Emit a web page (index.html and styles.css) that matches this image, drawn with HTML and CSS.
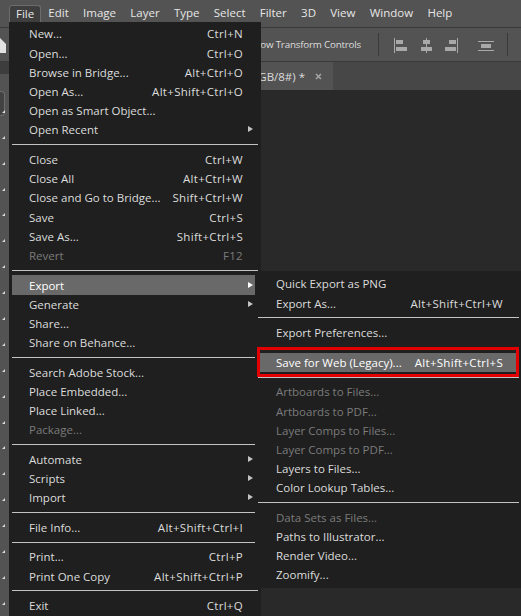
FILE: index.html
```html
<!DOCTYPE html>
<html lang="en">
<head>
<meta charset="utf-8">
<title>Photoshop File menu</title>
<link rel="stylesheet" href="styles.css">
</head>
<body>
<div class="app">
  <header class="menubar">
    <div class="mb-item is-open">File</div>
    <div class="mb-item">Edit</div>
    <div class="mb-item">Image</div>
    <div class="mb-item">Layer</div>
    <div class="mb-item">Type</div>
    <div class="mb-item">Select</div>
    <div class="mb-item">Filter</div>
    <div class="mb-item">3D</div>
    <div class="mb-item">View</div>
    <div class="mb-item">Window</div>
    <div class="mb-item">Help</div>
  </header>

  <div class="optionsbar">
    <div class="home">
      <svg width="9" height="16" viewBox="0 0 9 16"><polygon points="0,1 6,7 6,16 0,16" fill="#e2e2e2"/></svg>
    </div>
    <div class="opt-fill">
      <span class="opt-check"></span>
      <span class="opt-label">Show Transform Controls</span>
    </div>
    <span class="vsep vsep-first"></span>
    <svg class="ico ico-1" width="16" height="16" viewBox="0 0 16 16">
      <rect x="1" y="1" width="1" height="15" fill="#a9a9a9"/>
      <rect x="3" y="3" width="7" height="4" fill="#a9a9a9"/>
      <rect x="3" y="10" width="11" height="4" fill="#a9a9a9"/>
    </svg>
    <svg class="ico ico-2" width="16" height="16" viewBox="0 0 16 16">
      <rect x="8" y="1" width="1" height="15" fill="#a9a9a9"/>
      <rect x="5" y="3" width="7" height="4" fill="#a9a9a9"/>
      <rect x="3" y="10" width="11" height="4" fill="#a9a9a9"/>
    </svg>
    <svg class="ico ico-3" width="16" height="16" viewBox="0 0 16 16">
      <rect x="14" y="1" width="1" height="15" fill="#a9a9a9"/>
      <rect x="6" y="3" width="7" height="4" fill="#a9a9a9"/>
      <rect x="2" y="10" width="11" height="4" fill="#a9a9a9"/>
    </svg>
    <svg class="ico ico-4" width="16" height="16" viewBox="0 0 16 16">
      <rect x="0" y="4" width="16" height="1" fill="#a9a9a9"/>
      <rect x="3" y="7" width="10" height="4" fill="#a9a9a9"/>
      <rect x="0" y="13" width="16" height="1" fill="#a9a9a9"/>
    </svg>
    <span class="vsep vsep-last"></span>
  </div>

  <div class="main">
    <aside class="tools">
      <div class="tools-head"></div>
      <div class="tool-list">
        <div class="tool active"><span class="tool-box"></span></div>
        <div class="tool"></div><div class="tool"></div><div class="tool"></div><div class="tool"></div>
        <div class="tool"></div><div class="tool"></div><div class="tool"></div><div class="tool"></div>
        <div class="tool"></div><div class="tool"></div><div class="tool"></div><div class="tool"></div>
        <div class="tool"></div><div class="tool"></div><div class="tool"></div><div class="tool"></div>
        <div class="tool"></div><div class="tool"></div><div class="tool"></div>
      </div>
    </aside>
    <section class="doc">
      <div class="tabbar">
        <div class="tab">
          <span class="tab-title">(RGB/8#) *</span>
          <svg class="tab-close" width="7" height="7" viewBox="0 0 7 7"><path d="M1 1 L6 6 M6 1 L1 6" stroke="#a4a4a4" stroke-width="1.6"/></svg>
        </div>
      </div>
      <div class="canvas"></div>
    </section>
  </div>

  <nav class="menu file-menu">
    <div class="mi"><span class="label">New...</span><span class="key">Ctrl+N</span><span class="sub"></span></div>
    <div class="mi"><span class="label">Open...</span><span class="key">Ctrl+O</span><span class="sub"></span></div>
    <div class="mi"><span class="label">Browse in Bridge...</span><span class="key">Alt+Ctrl+O</span><span class="sub"></span></div>
    <div class="mi"><span class="label">Open As...</span><span class="key">Alt+Shift+Ctrl+O</span><span class="sub"></span></div>
    <div class="mi"><span class="label">Open as Smart Object...</span><span class="sub"></span></div>
    <div class="mi"><span class="label">Open Recent</span><span class="sub has-sub"></span></div>
    <div class="sep"></div>
    <div class="mi"><span class="label">Close</span><span class="key">Ctrl+W</span><span class="sub"></span></div>
    <div class="mi"><span class="label">Close All</span><span class="key">Alt+Ctrl+W</span><span class="sub"></span></div>
    <div class="mi"><span class="label">Close and Go to Bridge...</span><span class="key">Shift+Ctrl+W</span><span class="sub"></span></div>
    <div class="mi"><span class="label">Save</span><span class="key">Ctrl+S</span><span class="sub"></span></div>
    <div class="mi"><span class="label">Save As...</span><span class="key">Shift+Ctrl+S</span><span class="sub"></span></div>
    <div class="mi dis"><span class="label">Revert</span><span class="key">F12</span><span class="sub"></span></div>
    <div class="sep"></div>
    <div class="mi hl"><span class="label">Export</span><span class="sub has-sub"></span></div>
    <div class="mi"><span class="label">Generate</span><span class="sub has-sub"></span></div>
    <div class="mi"><span class="label">Share...</span><span class="sub"></span></div>
    <div class="mi"><span class="label">Share on Behance...</span><span class="sub"></span></div>
    <div class="sep"></div>
    <div class="mi"><span class="label">Search Adobe Stock...</span><span class="sub"></span></div>
    <div class="mi"><span class="label">Place Embedded...</span><span class="sub"></span></div>
    <div class="mi"><span class="label">Place Linked...</span><span class="sub"></span></div>
    <div class="mi dis"><span class="label">Package...</span><span class="sub"></span></div>
    <div class="sep"></div>
    <div class="mi"><span class="label">Automate</span><span class="sub has-sub"></span></div>
    <div class="mi"><span class="label">Scripts</span><span class="sub has-sub"></span></div>
    <div class="mi"><span class="label">Import</span><span class="sub has-sub"></span></div>
    <div class="sep"></div>
    <div class="mi"><span class="label">File Info...</span><span class="key">Alt+Shift+Ctrl+I</span><span class="sub"></span></div>
    <div class="sep"></div>
    <div class="mi"><span class="label">Print...</span><span class="key">Ctrl+P</span><span class="sub"></span></div>
    <div class="mi"><span class="label">Print One Copy</span><span class="key">Alt+Shift+Ctrl+P</span><span class="sub"></span></div>
    <div class="sep"></div>
    <div class="mi"><span class="label">Exit</span><span class="key">Ctrl+Q</span><span class="sub"></span></div>
  </nav>

  <nav class="menu sub-menu">
    <div class="mi"><span class="label">Quick Export as PNG</span><span class="sub"></span></div>
    <div class="mi"><span class="label">Export As...</span><span class="key">Alt+Shift+Ctrl+W</span><span class="sub"></span></div>
    <div class="sep"></div>
    <div class="mi"><span class="label">Export Preferences...</span><span class="sub"></span></div>
    <div class="sep"></div>
    <div class="mi hl"><span class="label">Save for Web (Legacy)...</span><span class="key">Alt+Shift+Ctrl+S</span><span class="sub"></span></div>
    <div class="sep"></div>
    <div class="mi dis"><span class="label">Artboards to Files...</span><span class="sub"></span></div>
    <div class="mi dis"><span class="label">Artboards to PDF...</span><span class="sub"></span></div>
    <div class="mi dis"><span class="label">Layer Comps to Files...</span><span class="sub"></span></div>
    <div class="mi dis"><span class="label">Layer Comps to PDF...</span><span class="sub"></span></div>
    <div class="mi"><span class="label">Layers to Files...</span><span class="sub"></span></div>
    <div class="mi"><span class="label">Color Lookup Tables...</span><span class="sub"></span></div>
    <div class="sep"></div>
    <div class="mi dis"><span class="label">Data Sets as Files...</span><span class="sub"></span></div>
    <div class="mi"><span class="label">Paths to Illustrator...</span><span class="sub"></span></div>
    <div class="mi"><span class="label">Render Video...</span><span class="sub"></span></div>
    <div class="mi"><span class="label">Zoomify...</span><span class="sub"></span></div>
  </nav>

  <div class="callout"></div>
</div>
</body>
</html>
```

FILE: styles.css
```css
html, body {
  margin: 0;
  padding: 0;
}

body {
  width: 521px;
  height: 616px;
  overflow: hidden;
  background: #292929;
  font-family: "Open Sans", "Noto Sans", "DejaVu Sans", sans-serif;
  font-size: 11.5px;
  -webkit-font-smoothing: antialiased;
}

.app {
  position: relative;
  width: 521px;
  height: 616px;
  overflow: hidden;
  display: flex;
  flex-direction: column;
}

/* ---------- menu bar ---------- */
.menubar {
  flex: none;
  height: 28px;
  box-sizing: border-box;
  padding: 5px 0 0 9px;
  background: #535353;
  border-bottom: 1px solid #3a3a3a;
  display: flex;
  align-items: flex-start;
}

.mb-item {
  height: 17px;
  line-height: 16px;
  padding: 0 7.15px;
  color: #e6e6e6;
  font-size: 11.5px;
  box-sizing: border-box;
  white-space: nowrap;
}

.mb-item.is-open {
  background: #3e3e3e;
  border: 1px solid #6c6c6c;
  border-bottom: none;
  border-radius: 3px 3px 0 0;
  padding: 0 6px;
}

/* ---------- options bar ---------- */
.optionsbar {
  flex: none;
  height: 34px;
  box-sizing: border-box;
  background: #535353;
  border-bottom: 1px solid #3a3a3a;
  display: flex;
  align-items: center;
}

.home {
  width: 9px;
  flex: none;
  display: flex;
}

.opt-fill {
  flex: 0 0 352px;
  display: flex;
  justify-content: flex-end;
  align-items: center;
  overflow: hidden;
  white-space: nowrap;
}

.opt-check {
  width: 11px;
  height: 11px;
  margin-right: 6px;
  border: 1px solid #8a8a8a;
  box-sizing: border-box;
}

.opt-label {
  color: #dedede;
  font-size: 9.8px;
  letter-spacing: -0.2px;
}

.vsep {
  flex: none;
  width: 1px;
  height: 23px;
  background: #393939;
}

.vsep-first { margin-left: 17px; }
.vsep-last { margin-left: 13px; }

.ico { flex: none; display: block; }
.ico-1 { margin-left: 14px; }
.ico-2 { margin-left: 9px; }
.ico-3 { margin-left: 9px; }
.ico-4 { margin-left: 19px; }

/* ---------- main area ---------- */
.main {
  flex: 1;
  display: flex;
  min-height: 0;
}

.tools {
  flex: none;
  width: 9px;
  background: #535353;
  display: flex;
  flex-direction: column;
}

.tools-head {
  height: 12px;
  background: #3d3d3d;
}

.tool-list {
  padding-top: 17px;
  display: flex;
  flex-direction: column;
}

.tool {
  position: relative;
  height: 25.9px;
  flex: none;
}

.tool::after {
  content: "";
  position: absolute;
  right: 4px;
  bottom: 4px;
  width: 0;
  height: 0;
  border-left: 3px solid transparent;
  border-bottom: 3px solid #dadada;
}

.tool-box {
  display: block;
  width: 5px;
  height: 25px;
  box-sizing: border-box;
  background: #424242;
  border: 1px solid #6e6e6e;
  border-left: none;
  border-radius: 0 4px 4px 0;
}

.doc {
  flex: 1;
  display: flex;
  flex-direction: column;
  min-width: 0;
}

.tabbar {
  flex: none;
  height: 28px;
  background: #474747;
  display: flex;
}

.tab {
  width: 324px;
  flex: none;
  box-sizing: border-box;
  padding-right: 11px;
  background: #535353;
  display: flex;
  justify-content: flex-end;
  align-items: center;
  overflow: hidden;
  white-space: nowrap;
  color: #dcdcdc;
  font-size: 11.5px;
}

.tab-close {
  flex: none;
  margin-left: 10px;
}

.canvas {
  flex: 1;
  background: #292929;
}

/* ---------- dropdown menus ---------- */
.menu {
  position: absolute;
  background: #1f1f1f;
  box-sizing: border-box;
  display: flex;
  flex-direction: column;
}

.file-menu {
  left: 9px;
  top: 22px;
  width: 252px;
  padding: 2.4px 3px 4px;
}

.sub-menu {
  left: 255px;
  top: 271px;
  width: 267px;
  padding: 3.4px 3px 3px;
}

.mi {
  flex: none;
  display: flex;
  align-items: center;
  height: 19.2px;
  padding-left: 17px;
  margin-right: 2px;
  color: #dcdcdc;
  font-size: 11.5px;
  white-space: nowrap;
}

.sub-menu .mi {
  margin-left: 2px;
  margin-right: 3px;
  padding-left: 16px;
}

.mi .label { flex: 1; }

.mi .key { letter-spacing: 0.3px; }

.mi .sub {
  flex: none;
  width: 13px;
  height: 7px;
  display: flex;
}

.mi .sub.has-sub::after {
  content: "";
  margin-left: 5px;
  width: 0;
  height: 0;
  border-left: 5px solid #c4c4c4;
  border-top: 3.5px solid transparent;
  border-bottom: 3.5px solid transparent;
}

.mi.hl {
  background: #696969;
  color: #ffffff;
}

.mi.hl .sub.has-sub::after { border-left-color: #ffffff; }

.mi.dis { color: #7b7b7b; }

.sep {
  flex: none;
  height: 10.4px;
  display: flex;
  align-items: center;
}

.sep::before {
  content: "";
  flex: 1;
  height: 1px;
  background: #c3c3c3;
}

/* ---------- annotation ---------- */
.callout {
  position: absolute;
  left: 257px;
  top: 347px;
  width: 262px;
  height: 30px;
  box-sizing: border-box;
  border: 3px solid #e40000;
}
```
